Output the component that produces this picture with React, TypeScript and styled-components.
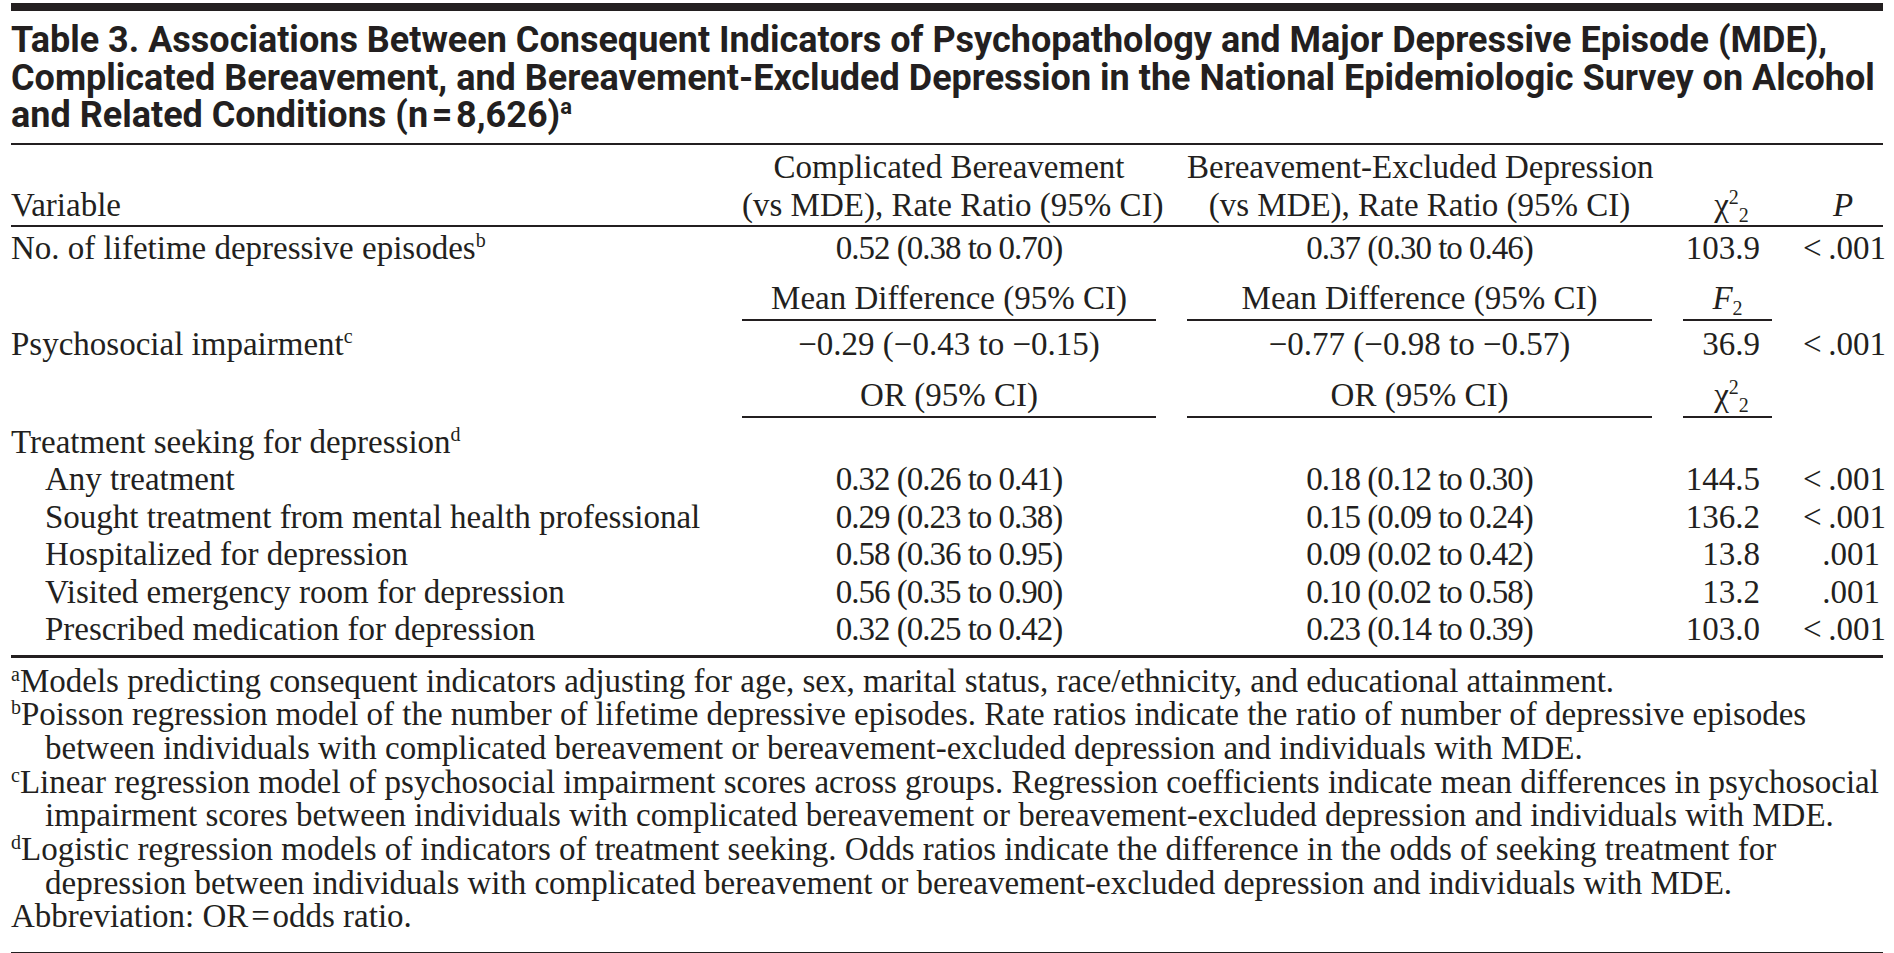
import React from "react";
import styled, { createGlobalStyle } from "styled-components";

const ink = "#231f20";

const GlobalStyle = createGlobalStyle`
  html, body {
    margin: 0;
    padding: 0;
    background: #ffffff;
  }
  body {
    color: ${ink};
    font-family: "Liberation Serif", "Times New Roman", serif;
  }
`;

const Page = styled.div`
  width: 1872px;
  height: 950px;
  padding: 3px 11px 0;
  overflow: hidden;
`;

const TopBar = styled.div`
  height: 8px;
  background: ${ink};
`;

const Title = styled.h1`
  margin: 11px 0 0;
  padding-bottom: 8px;
  border-bottom: 2px solid ${ink};
  font-family: Roboto, "Liberation Sans", sans-serif;
  font-weight: 700;
  font-size: 36px;
  line-height: 37.5px;
  letter-spacing: 0;
  color: ${ink};
`;

const TitleLine = styled.span`
  display: block;
  white-space: nowrap;
`;

const TitleSup = styled.sup`
  font-size: 22px;
  line-height: 0;
  vertical-align: 13px;
`;

const Table = styled.div`
  font-size: 33px;
  border-bottom: 3px solid ${ink};
  padding-bottom: 6px;
`;

const Row = styled.div<{ $top?: number; $bottom?: number; $rule?: boolean; $lh?: number }>`
  display: grid;
  grid-template-columns: 700px 414px 465px 89px 1fr;
  column-gap: 31px;
  align-items: end;
  padding-top: ${(p) => p.$top ?? 0}px;
  padding-bottom: ${(p) => p.$bottom ?? 0}px;
  border-bottom: ${(p) => (p.$rule ? `2px solid ${ink}` : "none")};
  line-height: ${(p) => p.$lh ?? 37.5}px;
`;

const Cell = styled.div<{
  $align?: "left" | "center" | "right";
  $indent?: boolean;
  $rule?: boolean;
  $pad?: number;
  $tight?: boolean;
}>`
  text-align: ${(p) => p.$align ?? "center"};
  white-space: nowrap;
  padding-left: ${(p) => (p.$indent ? 34 : 0)}px;
  padding-right: ${(p) => p.$pad ?? 0}px;
  padding-bottom: ${(p) => (p.$rule ? 1 : 0)}px;
  border-bottom: ${(p) => (p.$rule ? `2px solid ${ink}` : "none")};
  letter-spacing: ${(p) => (p.$tight ? "-1px" : "0")};
`;

const Sup = styled.sup`
  font-size: 20px;
  line-height: 0;
  vertical-align: 12px;
`;

const Sub = styled.sub`
  font-size: 20px;
  line-height: 0;
  vertical-align: -6px;
`;

const Ital = styled.i`
  font-style: italic;
`;

const ChiMark = styled.span`
  margin-left: 8px;
`;

const Notes = styled.div`
  font-size: 33px;
  line-height: 33.7px;
  padding: 7px 0 18px;
  border-bottom: 3px solid ${ink};
`;

const Note = styled.p`
  margin: 0;
  white-space: nowrap;
  padding-left: 34px;
  text-indent: -34px;
`;

const NoteMark = styled.sup`
  font-size: 20px;
  line-height: 0;
  vertical-align: 11px;
`;

const Chi = () => (
  <ChiMark>
    χ<Sup>2</Sup>
    <Sub>2</Sub>
  </ChiMark>
);

type DataRow = {
  label: string;
  cb: string;
  be: string;
  stat: string;
  p: string;
};

const LT = "<\u2009.001";

const treatment: DataRow[] = [
  { label: "Any treatment", cb: "0.32 (0.26 to 0.41)", be: "0.18 (0.12 to 0.30)", stat: "144.5", p: LT },
  {
    label: "Sought treatment from mental health professional",
    cb: "0.29 (0.23 to 0.38)",
    be: "0.15 (0.09 to 0.24)",
    stat: "136.2",
    p: LT,
  },
  { label: "Hospitalized for depression", cb: "0.58 (0.36 to 0.95)", be: "0.09 (0.02 to 0.42)", stat: "13.8", p: ".001" },
  {
    label: "Visited emergency room for depression",
    cb: "0.56 (0.35 to 0.90)",
    be: "0.10 (0.02 to 0.58)",
    stat: "13.2",
    p: ".001",
  },
  {
    label: "Prescribed medication for depression",
    cb: "0.32 (0.25 to 0.42)",
    be: "0.23 (0.14 to 0.39)",
    stat: "103.0",
    p: LT,
  },
];

function App() {
  return (
    <Page>
      <GlobalStyle />
      <TopBar />
      <Title>
        <TitleLine>
          Table 3. Associations Between Consequent Indicators of Psychopathology and Major Depressive Episode (MDE),
        </TitleLine>
        <TitleLine>
          Complicated Bereavement, and Bereavement-Excluded Depression in the National Epidemiologic Survey on Alcohol
        </TitleLine>
        <TitleLine>
          and Related Conditions (n{"\u200a=\u200a"}8,626)<TitleSup>a</TitleSup>
        </TitleLine>
      </Title>

      <Table>
        <Row $top={3} $bottom={1} $rule $lh={38}>
          <Cell $align="left">Variable</Cell>
          <Cell>
            Complicated Bereavement
            <br />
            (vs MDE), Rate Ratio (95% CI)
          </Cell>
          <Cell>
            Bereavement-Excluded Depression
            <br />
            (vs MDE), Rate Ratio (95% CI)
          </Cell>
          <Cell>
            <Chi />
          </Cell>
          <Cell>
            <Ital>P</Ital>
          </Cell>
        </Row>

        <Row $top={3}>
          <Cell $align="left">
            No. of lifetime depressive episodes<Sup>b</Sup>
          </Cell>
          <Cell $tight>0.52 (0.38 to 0.70)</Cell>
          <Cell $tight>0.37 (0.30 to 0.46)</Cell>
          <Cell $align="right" $pad={12}>
            103.9
          </Cell>
          <Cell $align="right" $pad={3}>
            {LT}
          </Cell>
        </Row>

        <Row $top={13}>
          <Cell $align="left" />
          <Cell $rule>Mean Difference (95% CI)</Cell>
          <Cell $rule>Mean Difference (95% CI)</Cell>
          <Cell $rule>
            <Ital>F</Ital>
            <Sub>2</Sub>
          </Cell>
          <Cell />
        </Row>

        <Row $top={5}>
          <Cell $align="left">
            Psychosocial impairment<Sup>c</Sup>
          </Cell>
          <Cell>−0.29 (−0.43 to −0.15)</Cell>
          <Cell>−0.77 (−0.98 to −0.57)</Cell>
          <Cell $align="right" $pad={12}>
            36.9
          </Cell>
          <Cell $align="right" $pad={3}>
            {LT}
          </Cell>
        </Row>

        <Row $top={14}>
          <Cell $align="left" />
          <Cell $rule>OR (95% CI)</Cell>
          <Cell $rule>OR (95% CI)</Cell>
          <Cell $rule>
            <Chi />
          </Cell>
          <Cell />
        </Row>

        <Row $top={6}>
          <Cell $align="left">
            Treatment seeking for depression<Sup>d</Sup>
          </Cell>
        </Row>

        {treatment.map((r) => (
          <Row key={r.label}>
            <Cell $align="left" $indent>
              {r.label}
            </Cell>
            <Cell $tight>{r.cb}</Cell>
            <Cell $tight>{r.be}</Cell>
            <Cell $align="right" $pad={12}>
              {r.stat}
            </Cell>
            <Cell $align="right" $pad={3}>
              {r.p}
            </Cell>
          </Row>
        ))}
      </Table>

      <Notes>
        <Note>
          <NoteMark>a</NoteMark>Models predicting consequent indicators adjusting for age, sex, marital status,
          race/ethnicity, and educational attainment.
        </Note>
        <Note>
          <NoteMark>b</NoteMark>Poisson regression model of the number of lifetime depressive episodes. Rate ratios
          indicate the ratio of number of depressive episodes
          <br />
          between individuals with complicated bereavement or bereavement-excluded depression and individuals with MDE.
        </Note>
        <Note>
          <NoteMark>c</NoteMark>Linear regression model of psychosocial impairment scores across groups. Regression
          coefficients indicate mean differences in psychosocial
          <br />
          impairment scores between individuals with complicated bereavement or bereavement-excluded depression and
          individuals with MDE.
        </Note>
        <Note>
          <NoteMark>d</NoteMark>Logistic regression models of indicators of treatment seeking. Odds ratios indicate the
          difference in the odds of seeking treatment for
          <br />
          depression between individuals with complicated bereavement or bereavement-excluded depression and
          individuals with MDE.
        </Note>
        <Note>Abbreviation: OR{"\u200a=\u200a"}odds ratio.</Note>
      </Notes>
    </Page>
  );
}

export default App;
